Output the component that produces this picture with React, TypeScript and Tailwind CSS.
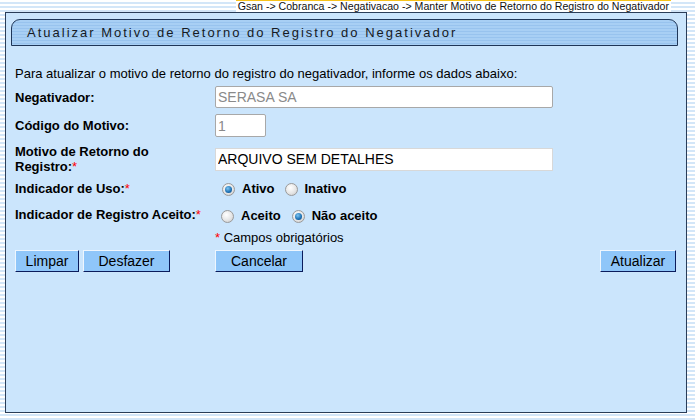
import { ReactNode } from "react";

type RadioProps = {
  checked?: boolean;
  label: string;
};

const Radio = ({ checked, label }: RadioProps) => {
  return (
    <label className="flex items-center">
      <span className="w-[13px] h-[13px] rounded-full border border-[#9a9a9a] bg-[radial-gradient(circle_at_40%_35%,#ffffff_0%,#e6e6e6_55%,#c4c4c4_100%)] flex items-center justify-center">
        {checked ? (
          <span className="w-[7px] h-[7px] rounded-full bg-[radial-gradient(circle_at_40%_35%,#7fc6f2_0%,#1b6fb3_60%,#0b3f73_100%)]" />
        ) : null}
      </span>
      <span className="ml-[7px] font-bold text-[13px]">{label}</span>
    </label>
  );
};

const Row = ({
  label,
  required,
  className,
  children,
}: {
  label: ReactNode;
  required?: boolean;
  className: string;
  children: ReactNode;
}) => {
  return (
    <div className={`flex items-center ${className}`}>
      <div className="w-[200px] font-bold text-[13px] leading-[15px]">
        {label}
        {required ? <span className="text-[#ff0000] font-normal">*</span> : ""}
      </div>
      {children}
    </div>
  );
};

const Btn = ({ children, className = "" }: { children: ReactNode; className?: string }) => {
  return (
    <button
      type="button"
      className={`h-[22px] bg-[#8fc6f9] border border-t-[#eef6fe] border-l-[#eef6fe] border-r-[#0b1c5c] border-b-[#0b1c5c] text-[14px] leading-none text-black ${className}`}
    >
      {children}
    </button>
  );
};

const App = () => {
  return (
    <div className="w-[695px] h-[420px] overflow-hidden bg-[repeating-linear-gradient(180deg,#ffffff_0px,#ffffff_2px,#d3e6f8_2px,#d3e6f8_4px)] font-['Liberation_Sans',Arial,sans-serif] text-black">
      {/* MARK: BREADCRUMB */}
      <div className="h-[12px] flex justify-end pr-[24px]">
        <p className="text-[10.6px] leading-[11px] text-[#111] bg-white border-t border-t-[#f7c21a] px-[2px]">
          Gsan -&gt; Cobranca -&gt; Negativacao -&gt; Manter Motivo de Retorno do Registro do Negativador
        </p>
      </div>

      {/* MARK: PANEL */}
      <div className="ml-[5px] w-[682px] h-[401px] border border-[#2a3d58] bg-[#cbe5fc]">
        <div className="mt-[6px] ml-[5px] w-[667px] h-[27px] rounded-tl-[9px] rounded-tr-[9px] border border-[#1f3658] bg-[repeating-linear-gradient(180deg,#a8cff4_0px,#a8cff4_2px,#98c3ee_2px,#98c3ee_3px)] flex items-center pl-[15px]">
          <h1 className="text-[13px] tracking-[2px] text-[#151a24]">
            Atualizar Motivo de Retorno do Registro do Negativador
          </h1>
        </div>

        <div className="pl-[9px] pr-[10px]">
          <p className="mt-[20px] text-[13px] leading-[15px]">
            Para atualizar o motivo de retorno do registro do negativador, informe os dados abaixo:
          </p>

          {/* MARK: NEGATIVADOR */}
          <Row label="Negativador:" className="mt-[5px] h-[22px]">
            <input
              readOnly
              value="SERASA SA"
              className="w-[338px] h-[22px] border border-[#a8a8a8] rounded-[2px] bg-white px-[2px] text-[14px] text-[#8a8a8a] outline-none"
            />
          </Row>

          {/* MARK: CODIGO */}
          <Row label="Código do Motivo:" className="mt-[6px] h-[23px]">
            <input
              readOnly
              value="1"
              className="w-[51px] h-[23px] border border-[#a8a8a8] rounded-[2px] bg-white px-[2px] text-[14px] text-[#8a8a8a] outline-none"
            />
          </Row>

          {/* MARK: MOTIVO */}
          <Row
            label={
              <>
                Motivo de Retorno do
                <br />
                Registro:
              </>
            }
            required
            className="mt-[7px] h-[30px]"
          >
            <input
              value="ARQUIVO SEM DETALHES"
              onChange={() => {}}
              className="w-[338px] h-[23px] border border-[#d8d8d8] bg-white px-[2px] text-[14px] text-black outline-none"
            />
          </Row>

          {/* MARK: INDICADOR DE USO */}
          <Row label="Indicador de Uso:" required className="mt-[4px] h-[20px]">
            <div className="flex items-center gap-[10px] pl-[7px] pt-[2px]">
              <Radio checked label="Ativo" />
              <Radio label="Inativo" />
            </div>
          </Row>

          {/* MARK: REGISTRO ACEITO */}
          <Row label="Indicador de Registro Aceito:" required className="mt-[6px] h-[20px]">
            <div className="flex items-center gap-[11px] pl-[6px] pt-[4px]">
              <Radio label="Aceito" />
              <Radio checked label="Não aceito" />
            </div>
          </Row>

          <p className="mt-[6px] ml-[200px] text-[13px] leading-[15px]">
            <span className="text-[#ff0000]">*</span> Campos obrigatórios
          </p>

          {/* MARK: BUTTONS */}
          <div className="mt-[5px] flex items-center">
            <Btn className="w-[64px]">Limpar</Btn>
            <Btn className="w-[87px] ml-[4px]">Desfazer</Btn>
            <Btn className="w-[88px] ml-[45px]">Cancelar</Btn>
            <Btn className="w-[76px] ml-auto">Atualizar</Btn>
          </div>
        </div>
      </div>
    </div>
  );
};

export default App;
